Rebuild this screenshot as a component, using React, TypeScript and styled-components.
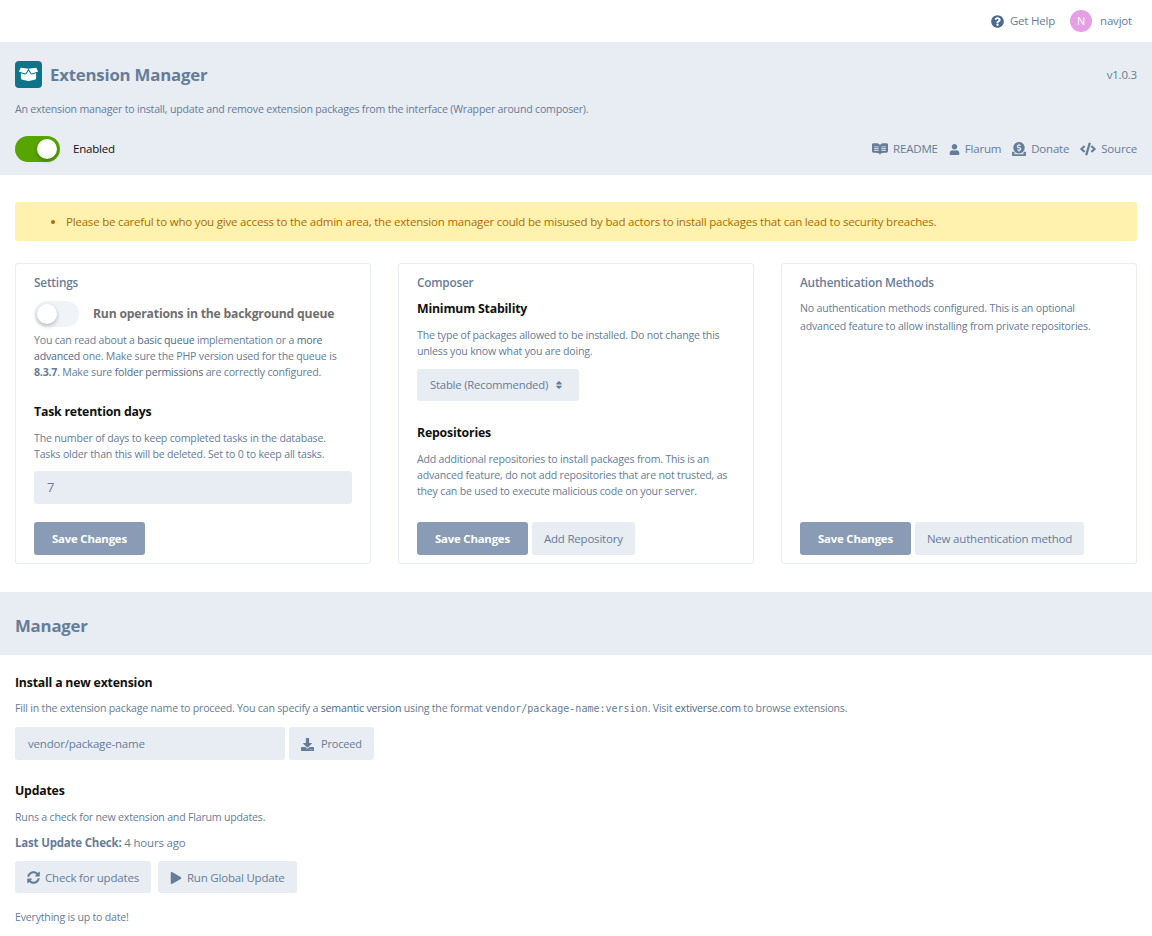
import React from "react";
import styled, { createGlobalStyle } from "styled-components";
import {
  FaBoxOpen,
  FaCode,
  FaDonate,
  FaDownload,
  FaPlay,
  FaQuestionCircle,
  FaReadme,
  FaSort,
  FaSyncAlt,
  FaUser,
} from "react-icons/fa";

const GlobalStyle = createGlobalStyle`
  body {
    margin: 0;
    background: #fff;
    color: #667d99;
    font-family: "Open Sans", "Liberation Sans", sans-serif;
    font-size: 11.5px;
    letter-spacing: -0.2px;
    line-height: 1.5;
  }
`;

const App = () => {
  return (
    <>
      <GlobalStyle />
      <TopBar>
        <HelpLink>
          <FaQuestionCircle size={13} />
          Get Help
        </HelpLink>
        <UserLink>
          <Avatar>N</Avatar>
          navjot
        </UserLink>
      </TopBar>

      <Header>
        <TitleRow>
          <TitleGroup>
            <LogoBox>
              <FaBoxOpen size={19} color="#fff" />
            </LogoBox>
            <Title>Extension Manager</Title>
          </TitleGroup>
          <span>v1.0.3</span>
        </TitleRow>
        <HeaderDesc>
          An extension manager to install, update and remove extension packages from the interface
          (Wrapper around composer).
        </HeaderDesc>
        <HeaderFooter>
          <EnabledGroup>
            <Switch $on />
            <EnabledLabel>Enabled</EnabledLabel>
          </EnabledGroup>
          <HeaderLinks>
            <HeaderLink>
              <FaReadme size={16} />
              README
            </HeaderLink>
            <HeaderLink>
              <FaUser size={11} />
              Flarum
            </HeaderLink>
            <HeaderLink>
              <FaDonate size={14} />
              Donate
            </HeaderLink>
            <HeaderLink>
              <FaCode size={16} />
              Source
            </HeaderLink>
          </HeaderLinks>
        </HeaderFooter>
      </Header>

      <Content>
        <Warning>
          <li>
            Please be careful to who you give access to the admin area, the extension manager could
            be misused by bad actors to install packages that can lead to security breaches.
          </li>
        </Warning>

        <Cards>
          <Card>
            <CardTitle>Settings</CardTitle>
            <SwitchRow>
              <Switch />
              <SwitchLabel>Run operations in the background queue</SwitchLabel>
            </SwitchRow>
            <HelpText $top={5}>
              You can read about a <A>basic queue</A> implementation or a <A>more advanced</A> one.
              Make sure the PHP version used for the queue is <B>8.3.7</B>. Make sure{" "}
              <A>folder permissions</A> are correctly configured.
            </HelpText>
            <FieldTitle $top={23}>Task retention days</FieldTitle>
            <HelpText>
              The number of days to keep completed tasks in the database. Tasks older than this will
              be deleted. Set to 0 to keep all tasks.
            </HelpText>
            <NumberInput>7</NumberInput>
            <CardActions>
              <PrimaryButton>Save Changes</PrimaryButton>
            </CardActions>
          </Card>

          <Card>
            <CardTitle>Composer</CardTitle>
            <FieldTitle $top={9}>Minimum Stability</FieldTitle>
            <HelpText>
              The type of packages allowed to be installed. Do not change this unless you know what
              you are doing.
            </HelpText>
            <SelectBox>
              Stable (Recommended)
              <FaSort size={10} />
            </SelectBox>
            <FieldTitle $top={23}>Repositories</FieldTitle>
            <HelpText>
              Add additional repositories to install packages from. This is an advanced feature, do
              not add repositories that are not trusted, as they can be used to execute malicious
              code on your server.
            </HelpText>
            <CardActions>
              <PrimaryButton>Save Changes</PrimaryButton>
              <Button>Add Repository</Button>
            </CardActions>
          </Card>

          <Card>
            <CardTitle>Authentication Methods</CardTitle>
            <AuthText>
              No authentication methods configured. This is an optional advanced feature to allow
              installing from private repositories.
            </AuthText>
            <CardActions>
              <PrimaryButton>Save Changes</PrimaryButton>
              <Button>New authentication method</Button>
            </CardActions>
          </Card>
        </Cards>
      </Content>

      <SectionBand>Manager</SectionBand>

      <Manager>
        <FieldTitle>Install a new extension</FieldTitle>
        <HelpText $top={8}>
          Fill in the extension package name to proceed. You can specify a <A>semantic version</A>{" "}
          using the format <Code>vendor/package-name:version</Code>. Visit <A>extiverse.com</A> to
          browse extensions.
        </HelpText>
        <InstallRow>
          <PackageInput>vendor/package-name</PackageInput>
          <ProceedButton>
            <FaDownload size={13} />
            Proceed
          </ProceedButton>
        </InstallRow>
        <FieldTitle $top={22}>Updates</FieldTitle>
        <HelpText>Runs a check for new extension and Flarum updates.</HelpText>
        <LastCheck>
          <strong>Last Update Check:</strong> 4 hours ago
        </LastCheck>
        <UpdateRow>
          <UpdateButton>
            <FaSyncAlt size={13} />
            Check for updates
          </UpdateButton>
          <UpdateButton>
            <FaPlay size={12} />
            Run Global Update
          </UpdateButton>
        </UpdateRow>
        <UpToDate>Everything is up to date!</UpToDate>
      </Manager>
    </>
  );
};

export default App;

const TopBar = styled.div`
  height: 42px;
  padding-right: 20px;
  display: flex;
  align-items: center;
  justify-content: flex-end;
  gap: 15px;
`;
const HelpLink = styled.span`
  display: flex;
  align-items: center;
  gap: 6px;
  svg {
    color: #4d698e;
  }
`;
const UserLink = styled.span`
  display: flex;
  align-items: center;
  gap: 8px;
`;
const Avatar = styled.span`
  width: 22px;
  height: 22px;
  border-radius: 50%;
  background: #e5a0e5;
  color: #fff;
  font-size: 11px;
  display: flex;
  align-items: center;
  justify-content: center;
`;

const Header = styled.header`
  height: 133px;
  box-sizing: border-box;
  background: #e8ecf3;
  padding: 19px 15px 0;
`;
const TitleRow = styled.div`
  display: flex;
  align-items: center;
  justify-content: space-between;
`;
const TitleGroup = styled.div`
  display: flex;
  align-items: center;
  gap: 8px;
`;
const LogoBox = styled.div`
  width: 27px;
  height: 27px;
  border-radius: 4px;
  background: #0f7489;
  display: flex;
  align-items: center;
  justify-content: center;
`;
const Title = styled.h2`
  margin: 0;
  font-size: 16.8px;
  line-height: 27px;
  font-weight: 700;
  color: #667d99;
`;
const HeaderDesc = styled.p`
  margin: 12px 0 0;
  font-size: 10.6px;
  line-height: 18px;
`;
const HeaderFooter = styled.div`
  margin-top: 18px;
  display: flex;
  align-items: center;
  justify-content: space-between;
`;
const EnabledGroup = styled.div`
  display: flex;
  align-items: center;
  gap: 13px;
`;
const EnabledLabel = styled.span`
  color: #111;
`;
const HeaderLinks = styled.div`
  display: flex;
  align-items: center;
  gap: 11px;
`;
const HeaderLink = styled.span`
  display: flex;
  align-items: center;
  gap: 5px;
`;

const Switch = styled.span<{ $on?: boolean }>`
  position: relative;
  flex: none;
  display: block;
  width: 45px;
  height: 26px;
  border-radius: 13px;
  background: ${({ $on }) => ($on ? "#58a400" : "#f0f3f8")};
  &::after {
    content: "";
    position: absolute;
    top: 3px;
    left: ${({ $on }) => ($on ? "22px" : "3px")};
    width: 20px;
    height: 20px;
    border-radius: 50%;
    background: #fff;
    box-shadow: 0 2px 4px rgba(0, 0, 0, 0.25);
  }
`;

const Content = styled.div`
  padding: 27px 15px 28px;
`;
const Warning = styled.ul`
  margin: 0;
  height: 39px;
  box-sizing: border-box;
  padding: 0 0 0 51px;
  background: #fff2ae;
  border-radius: 3px;
  display: flex;
  align-items: center;
  color: #ad6c00;
`;
const Cards = styled.div`
  margin-top: 22px;
  display: grid;
  grid-template-columns: repeat(3, 356px);
  justify-content: space-between;
`;
const Card = styled.section`
  height: 301px;
  box-sizing: border-box;
  border: 1px solid #e8ecf3;
  border-radius: 3px;
  padding: 9px 18px 8px;
  display: flex;
  flex-direction: column;
`;
const CardTitle = styled.h3`
  margin: 0;
  font-size: 11.8px;
  line-height: 18px;
  font-weight: 600;
  color: #667d99;
`;
const SwitchRow = styled.div`
  margin-top: 10px;
  display: flex;
  align-items: center;
  gap: 14px;
`;
const SwitchLabel = styled.span`
  font-size: 12.2px;
  font-weight: 700;
  color: #6f6f6f;
`;
const FieldTitle = styled.h4<{ $top?: number }>`
  margin: ${({ $top }) => $top ?? 0}px 0 0;
  font-size: 12.3px;
  line-height: 18px;
  font-weight: 700;
  color: #111;
`;
const HelpText = styled.p<{ $top?: number }>`
  margin: ${({ $top }) => $top ?? 9}px 0 0;
  font-size: 10.6px;
  line-height: 16px;
`;
const AuthText = styled(HelpText)`
  margin-top: 8px;
  line-height: 18px;
`;
const A = styled.a`
  color: #4d698e;
`;
const B = styled.strong`
  font-weight: 700;
`;
const Code = styled.code`
  font-family: "DejaVu Sans Mono", "Liberation Mono", monospace;
  font-size: 10px;
  letter-spacing: 0;
`;
const NumberInput = styled.div`
  margin-top: 9px;
  height: 33px;
  box-sizing: border-box;
  padding: 0 13px;
  background: #e8ecf3;
  border-radius: 3px;
  display: flex;
  align-items: center;
  font-size: 13px;
`;
const CardActions = styled.div`
  margin-top: auto;
  display: flex;
  gap: 4px;
`;
const Button = styled.button`
  height: 33px;
  box-sizing: border-box;
  padding: 1px 12px 0;
  border: 0;
  border-radius: 3px;
  background: #e8ecf3;
  color: #667d99;
  font: inherit;
  letter-spacing: inherit;
  display: flex;
  align-items: center;
  gap: 7px;
`;
const PrimaryButton = styled(Button)`
  background: #8a9cb5;
  color: #fff;
  font-size: 11.4px;
  font-weight: 700;
  padding: 1px 18px 0;
`;
const ProceedButton = styled(Button)`
  font-size: 11px;
`;
const UpdateButton = styled(Button)`
  height: 32px;
  gap: 5px;
`;
const SelectBox = styled.div`
  margin-top: 10px;
  align-self: flex-start;
  height: 32px;
  box-sizing: border-box;
  padding: 0 15px 0 13px;
  background: #e8ecf3;
  border-radius: 3px;
  font-size: 11.3px;
  display: flex;
  align-items: center;
  gap: 6px;
`;

const SectionBand = styled.h3`
  margin: 0;
  height: 63px;
  box-sizing: border-box;
  padding: 4px 15px 0;
  background: #e8ecf3;
  color: #667d99;
  font-size: 16.8px;
  font-weight: 700;
  display: flex;
  align-items: center;
`;
const Manager = styled.div`
  padding: 19px 15px 0;
`;
const InstallRow = styled.div`
  margin-top: 10px;
  display: flex;
  gap: 4px;
`;
const PackageInput = styled.div`
  width: 270px;
  height: 33px;
  box-sizing: border-box;
  padding: 0 13px;
  background: #e8ecf3;
  border-radius: 3px;
  display: flex;
  align-items: center;
`;
const LastCheck = styled.div`
  margin-top: 9px;
  line-height: 18px;
`;
const UpdateRow = styled.div`
  margin-top: 9px;
  display: flex;
  gap: 7px;
`;
const UpToDate = styled.p`
  margin: 16px 0 0;
  font-size: 10.6px;
  line-height: 16px;
`;
